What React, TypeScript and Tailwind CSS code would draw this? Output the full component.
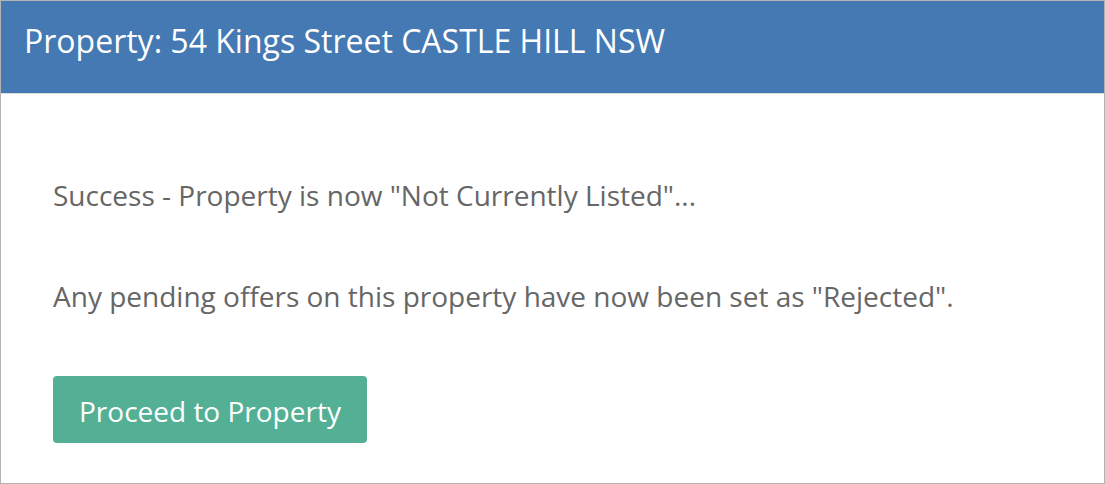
export default function App() {
  return (
    <div className="w-[1105px] h-[484px] bg-white" style={{ fontFamily: '"Open Sans", sans-serif' }}>
      <div className="h-full border border-[#b3b3b3] flex flex-col">
        <div className="h-[93px] shrink-0 bg-[#4479b3] border-b border-[#dcdcdc] px-[23px] pt-[18px]">
          <h1 className="text-white text-[32px] leading-[44px]">Property: 54 Kings Street CASTLE HILL NSW</h1>
        </div>
        <div className="flex-1 px-[52px] pt-[82px] text-[#666666] text-[28px]">
          <p className="leading-[38px]">Success - Property is now "Not Currently Listed"...</p>
          <p className="leading-[38px] mt-[63px]">Any pending offers on this property have now been set as "Rejected".</p>
          <button className="mt-[61px] h-[67px] px-[26px] pt-[2px] rounded-[4px] bg-[#53b095] text-white text-[28px] leading-[38px]">Proceed to Property</button>
        </div>
      </div>
    </div>
  );
}
